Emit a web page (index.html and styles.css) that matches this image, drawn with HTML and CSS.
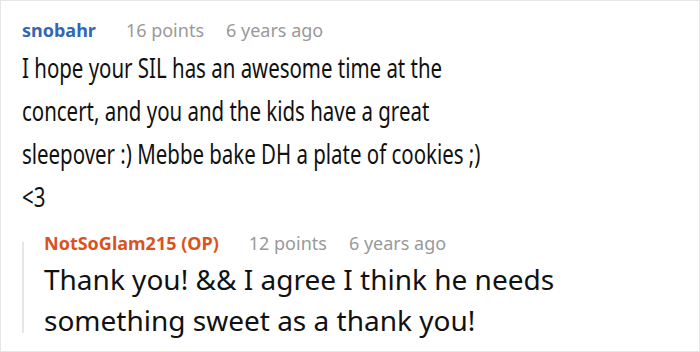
FILE: index.html
```html
<!DOCTYPE html>
<html>
<head>
<meta charset="utf-8">
<link rel="stylesheet" href="styles.css">
</head>
<body>
<div class="thread">
  <div class="comment">
    <div class="meta">
      <span class="author">snobahr</span>
      <span class="info">16 points</span>
      <span class="info">6 years ago</span>
    </div>
    <p class="text text-main">I hope your SIL has an awesome time at the concert, and you and the kids have a great sleepover :) Mebbe bake DH a plate of cookies ;) &lt;3</p>
    <div class="reply">
      <div class="reply-line"></div>
      <div class="reply-content">
        <div class="meta">
          <span class="author op">NotSoGlam215 (OP)</span>
          <span class="info">12 points</span>
          <span class="info">6 years ago</span>
        </div>
        <p class="text text-reply">Thank you! &amp;&amp; I agree I think he needs something sweet as a thank you!</p>
      </div>
    </div>
  </div>
</div>
</body>
</html>
```
FILE: styles.css
```css
html, body {
  margin: 0;
  padding: 0;
  background: #ffffff;
}
.thread {
  width: 700px;
  height: 352px;
  box-sizing: border-box;
  border: 1px solid #e6e6e6;
  font-family: "Noto Sans", "Open Sans", sans-serif;
  overflow: hidden;
}
.comment {
  padding: 17px 20px 0 21px;
}
.meta {
  display: flex;
  gap: 0 22px;
  font-size: 18px;
  line-height: 24px;
  white-space: nowrap;
}
.author {
  font-weight: 700;
  color: #3366b3;
  margin-right: 8px;
}
.author.op {
  color: #d9531e;
}
.info {
  color: #999999;
}
.text {
  margin: 0;
  font-size: 28px;
  color: #111111;
}
.text-main {
  margin-top: 4px;
  line-height: 43px;
  width: 650px;
  transform: scaleX(0.73);
  transform-origin: left top;
}
.reply {
  display: flex;
  margin-top: 13px;
}
.reply-line {
  width: 2px;
  background: #e6e6e6;
  flex: none;
  margin: 11px 0 8px 0;
}
.reply-content {
  padding-left: 20px;
}
.text-reply {
  margin-top: 4px;
  line-height: 41px;
}
```
